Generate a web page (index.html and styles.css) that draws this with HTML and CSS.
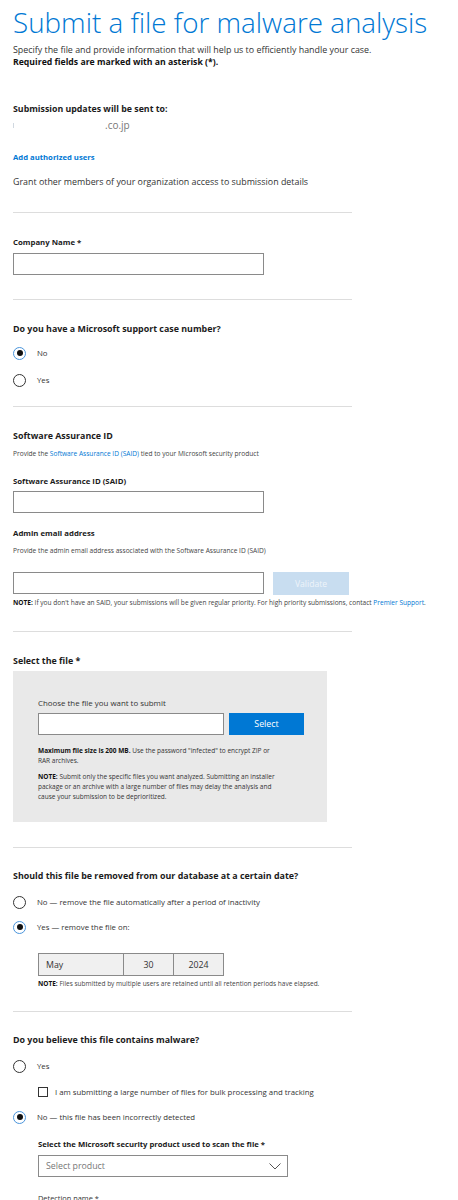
FILE: index.html
```html
<!DOCTYPE html>
<html>
	<head>
		<meta charset="utf-8" />
		<meta name="viewport" content="width=device-width">
		<title>Submit a file for malware analysis</title>
		<link rel="stylesheet" href="styles.css">
	</head>

	<body>
		<div class="page">
			<h1 class="page-tit">Submit a file for malware analysis</h1>
			<p class="intro">Specify the file and provide information that will help us to efficiently handle your case.<br><b>Required fields are marked with an asterisk (*).</b></p>

			<!--联系人-->
			<h3 class="label label-updates">Submission updates will be sent to:</h3>
			<p class="email"><span class="email-user"></span>.co.jp</p>
			<a class="link-users" href="#">Add authorized users</a>
			<p class="grant">Grant other members of your organization access to submission details</p>
			<div class="divider"></div>

			<label class="field-label label-company">Company Name *</label>
			<input class="text-input input-company" type="text">
			<div class="divider"></div>

			<!--支持案例-->
			<h3 class="question">Do you have a Microsoft support case number?</h3>
			<div class="radio-row row-case-no"><span class="radio checked"></span>No</div>
			<div class="radio-row row-case-yes"><span class="radio"></span>Yes</div>
			<div class="divider divider-case"></div>

			<!--SAID-->
			<h3 class="question">Software Assurance ID</h3>
			<p class="tiny tiny-said">Provide the <a href="#">Software Assurance ID (SAID)</a> tied to your Microsoft security product</p>
			<label class="field-label label-said">Software Assurance ID (SAID)</label>
			<input class="text-input input-said" type="text">
			<label class="field-label label-admin">Admin email address</label>
			<p class="tiny tiny-admin">Provide the admin email address associated with the Software Assurance ID (SAID)</p>
			<div class="admin-row">
				<input class="text-input" type="text">
				<button class="btn-validate" type="button">Validate</button>
			</div>
			<p class="tiny tiny-note"><b>NOTE:</b> If you don't have an SAID, your submissions will be given regular priority. For high priority submissions, contact <a href="#">Premier Support</a>.</p>
			<div class="divider"></div>

			<!--选择文件-->
			<h3 class="question">Select the file *</h3>
			<div class="file-box">
				<p class="file-tit">Choose the file you want to submit</p>
				<div class="file-row">
					<input class="text-input" type="text">
					<button class="btn-select" type="button">Select</button>
				</div>
				<p class="file-text file-size"><b>Maximum file size is 200 MB.</b> Use the password "infected" to encrypt ZIP or RAR archives.</p>
				<p class="file-text file-note"><b>NOTE:</b> Submit only the specific files you want analyzed. Submitting an installer package or an archive with a large number of files may delay the analysis and cause your submission to be deprioritized.</p>
			</div>
			<div class="divider divider-file"></div>

			<!--删除日期-->
			<h3 class="question">Should this file be removed from our database at a certain date?</h3>
			<div class="radio-row row-remove-no"><span class="radio"></span>No — remove the file automatically after a period of inactivity</div>
			<div class="radio-row row-remove-yes"><span class="radio checked"></span>Yes — remove the file on:</div>
			<div class="date-box">
				<span class="date-month">May</span>
				<span class="date-day">30</span>
				<span class="date-year">2024</span>
			</div>
			<p class="tiny date-note"><b>NOTE:</b> Files submitted by multiple users are retained until all retention periods have elapsed.</p>
			<div class="divider divider-date"></div>

			<!--是否恶意-->
			<h3 class="question">Do you believe this file contains malware?</h3>
			<div class="radio-row row-mal-yes"><span class="radio"></span>Yes</div>
			<div class="check-row"><span class="checkbox"></span>I am submitting a large number of files for bulk processing and tracking</div>
			<div class="radio-row row-mal-no"><span class="radio checked"></span>No — this file has been incorrectly detected</div>
			<div class="sub-field">
				<label class="product-label">Select the Microsoft security product used to scan the file *</label>
				<div class="select-box">
					<span>Select product</span>
					<svg class="chevron" width="12" height="7" viewBox="0 0 12 7"><polyline points="0.5,0.5 6,6 11.5,0.5" fill="none" stroke="#555" stroke-width="1"/></svg>
				</div>
				<label class="detect-label">Detection name *</label>
			</div>
		</div>
	</body>
</html>
```

FILE: styles.css
```css
/*初始化样式*/

* {
	padding: 0;
	margin: 0;
	box-sizing: border-box;
}

body {
	background: #fff;
	font-family: "Open Sans", "Liberation Sans", sans-serif;
	color: #333;
}

input,
button {
	-webkit-appearance: none;
	outline: none;
	font-family: "Open Sans", "Liberation Sans", sans-serif;
}

a {
	color: #0078d4;
	text-decoration: none;
}

.page {
	padding: 0 0 40px 13px;
}

/*标题*/

.page-tit {
	font-size: 27.8px;
	font-weight: 300;
	line-height: 44px;
	color: #0078d4;
	white-space: nowrap;
}

.intro {
	font-size: 8.9px;
	line-height: 12px;
	color: #333;
}

.intro b {
	font-size: 8.7px;
	color: #111;
}

.label {
	font-size: 8.8px;
	font-weight: 700;
	line-height: 12px;
	color: #1b1b1b;
}

.label-updates {
	margin-top: 35px;
}

.email {
	display: flex;
	align-items: center;
	margin-top: 4px;
	font-size: 10px;
	line-height: 12px;
	color: #777;
}

.email-user {
	width: 92px;
	height: 5px;
	border-left: 1px solid #d0d8e0;
}

.link-users {
	display: block;
	margin-top: 20px;
	font-size: 7.7px;
	font-weight: 700;
	line-height: 12px;
}

.grant {
	margin-top: 12px;
	font-size: 8.9px;
	line-height: 14px;
	color: #333;
}

.divider {
	width: 339px;
	height: 1px;
	margin-top: 23px;
	background: #ddd;
}

/*表单*/

.field-label {
	display: block;
	font-size: 7.8px;
	font-weight: 700;
	line-height: 12px;
	color: #1b1b1b;
}

.label-company {
	margin-top: 23px;
}

.text-input {
	display: block;
	width: 251px;
	height: 22px;
	border: 1px solid #8a8a8a;
	background: #fff;
}

.input-company {
	margin-top: 5px;
}

.input-company + .divider {
	margin-top: 24px;
}

.question {
	margin-top: 23px;
	font-size: 8.9px;
	font-weight: 700;
	line-height: 12px;
	color: #1b1b1b;
}

.radio-row {
	display: flex;
	align-items: center;
	height: 14px;
	font-size: 7.8px;
	color: #333;
}

.radio {
	width: 13px;
	height: 13px;
	margin-right: 11px;
	border: 1px solid #333;
	border-radius: 50%;
	display: flex;
	align-items: center;
	justify-content: center;
	flex-shrink: 0;
}

.radio.checked {
	border-color: #4a95dc;
}

.radio.checked:after {
	content: "";
	width: 6px;
	height: 6px;
	border-radius: 50%;
	background: #111;
}

.row-case-no {
	margin-top: 11px;
}

.row-case-yes {
	margin-top: 13px;
}

.divider-case {
	margin-top: 19px;
}

.tiny {
	font-size: 6.6px;
	line-height: 10px;
	color: #444;
	white-space: nowrap;
}

.tiny b {
	color: #111;
}

.tiny-said {
	margin-top: 7px;
}

.label-said {
	margin-top: 16px;
}

.input-said {
	margin-top: 4px;
}

.label-admin {
	margin-top: 14px;
}

.tiny-admin {
	margin-top: 7px;
}

.admin-row {
	display: flex;
	gap: 9px;
	margin-top: 16px;
}

.btn-validate {
	width: 76px;
	height: 23px;
	border: none;
	background: #c8ddf0;
	color: #eef4fa;
	font-size: 8.6px;
}

.tiny-note {
	margin-top: 3px;
	font-size: 6.55px;
}

/*文件*/

.file-box {
	width: 314px;
	margin-top: 4px;
	padding: 26px 0 20px 25px;
	background: #e9e9e9;
}

.file-tit {
	font-size: 7.9px;
	line-height: 12px;
	color: #333;
}

.file-row {
	display: flex;
	gap: 5px;
	margin-top: 4px;
}

.file-row .text-input {
	width: 186px;
}

.btn-select {
	width: 75px;
	height: 22px;
	border: none;
	background: #0078d4;
	color: #fff;
	font-size: 8.8px;
}

.file-text {
	width: 242px;
	font-size: 6.5px;
	line-height: 10px;
	color: #333;
}

.file-text b {
	color: #111;
}

.file-size {
	margin-top: 11px;
}

.file-note {
	margin-top: 6px;
}

.divider-file {
	margin-top: 25px;
}

.divider-file + .question {
	margin-top: 22px;
}

.row-remove-no {
	margin-top: 13px;
}

.row-remove-yes {
	margin-top: 11px;
}

.date-box {
	display: flex;
	width: 186px;
	height: 23px;
	margin: 19px 0 0 25px;
	border: 1px solid #8a8a8a;
	background: #f0f0f0;
	font-size: 8.8px;
	color: #333;
}

.date-box span {
	display: flex;
	align-items: center;
}

.date-month {
	width: 85px;
	padding-left: 7px;
	border-right: 1px solid #8a8a8a;
}

.date-day {
	width: 50px;
	justify-content: center;
	border-right: 1px solid #8a8a8a;
}

.date-year {
	flex: 1;
	justify-content: center;
}

.date-note {
	margin: 3px 0 0 25px;
	font-size: 6.5px;
}

.divider-date {
	margin-top: 22px;
}

.divider-date + .question {
	margin-top: 22px;
}

.row-mal-yes {
	margin-top: 13px;
}

.check-row {
	display: flex;
	align-items: center;
	height: 14px;
	margin: 12px 0 0 25px;
	font-size: 7.8px;
	color: #333;
}

.checkbox {
	width: 10px;
	height: 10px;
	margin-right: 7px;
	border: 1px solid #333;
}

.row-mal-no {
	margin-top: 11px;
}

.sub-field {
	padding-left: 25px;
}

.product-label {
	display: block;
	margin-top: 14px;
	font-size: 7.7px;
	font-weight: 700;
	line-height: 12px;
	color: #1b1b1b;
}

.select-box {
	display: flex;
	align-items: center;
	justify-content: space-between;
	width: 250px;
	height: 22px;
	margin-top: 5px;
	padding: 0 6px 0 7px;
	border: 1px solid #8a8a8a;
	font-size: 8.8px;
	color: #777;
}

.detect-label {
	display: block;
	margin-top: 15px;
	font-size: 7.4px;
	line-height: 12px;
	color: #333;
}
```
